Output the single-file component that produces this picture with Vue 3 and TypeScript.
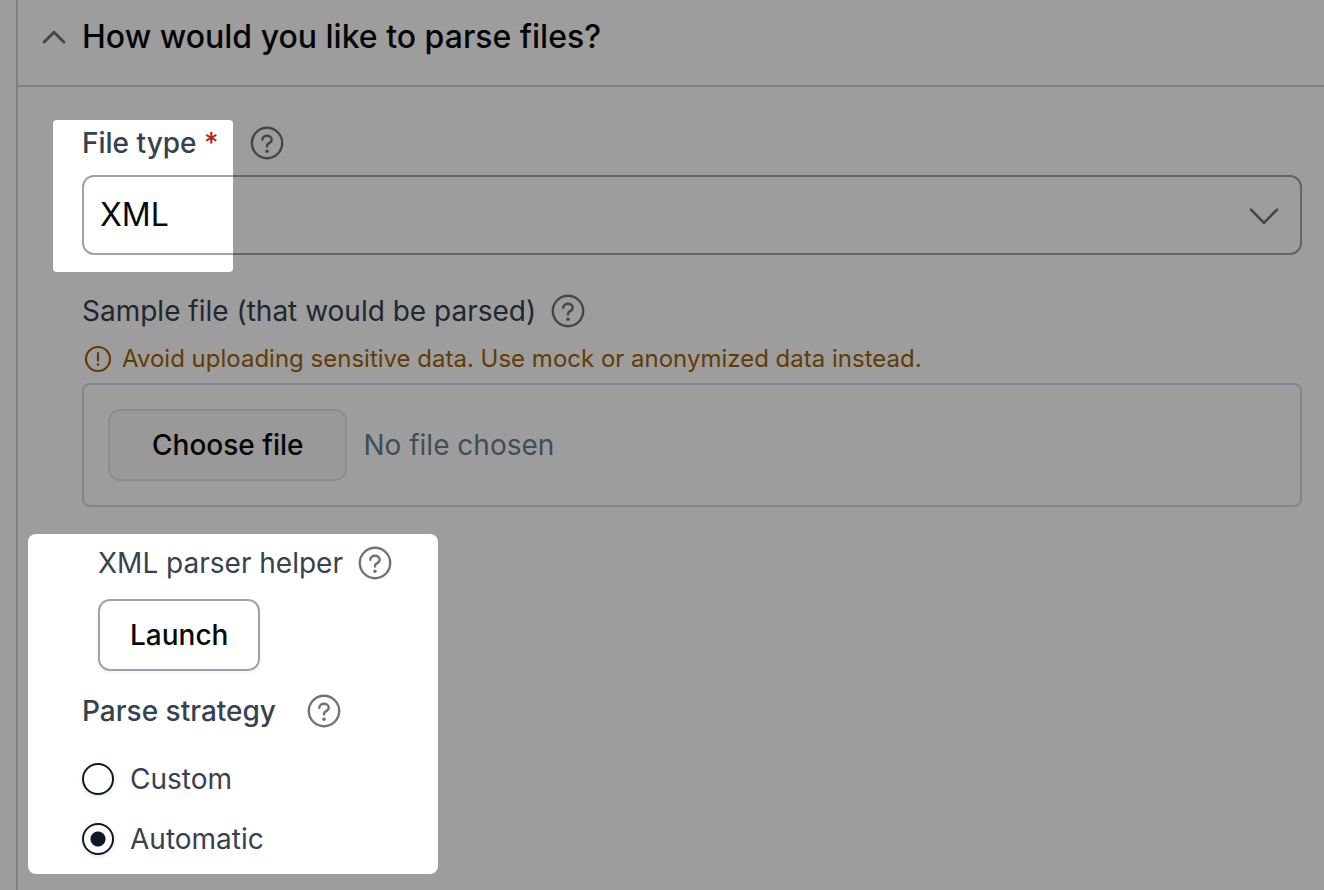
<script setup lang="ts">
import { computed, ref } from 'vue'

interface Hole {
  x: number
  y: number
  width: number
  height: number
  radius: number
}

const open = ref(true)
const fileType = ref('XML')
const fileTypes = ['XML', 'JSON', 'CSV']
const strategy = ref('automatic')
const strategies = [
  { value: 'custom', label: 'Custom' },
  { value: 'automatic', label: 'Automatic' },
]

const picker = ref<HTMLInputElement | null>(null)
const fileName = ref('')
const fileLabel = computed(() => fileName.value || 'No file chosen')

function onPick(event: Event) {
  fileName.value = (event.target as HTMLInputElement).files?.[0]?.name ?? ''
}

// Regions left undimmed by the tour overlay
const holes: Hole[] = [
  { x: 53, y: 120, width: 180, height: 152, radius: 4 },
  { x: 28, y: 534, width: 410, height: 340, radius: 8 },
]
</script>

<template>
  <main class="page">
    <svg class="symbols" aria-hidden="true">
      <symbol id="help" viewBox="0 0 34 34">
        <circle cx="17" cy="17" r="15.2" fill="none" stroke="currentColor" stroke-width="2.4" />
        <path
          d="M12.3 13.8C12.3 11.3 14.4 9.8 17 9.8C19.7 9.8 21.7 11.4 21.7 13.7C21.7 16 19.8 16.8 18.4 17.6C17.4 18.2 17 18.9 17 20.4"
          fill="none" stroke="currentColor" stroke-width="2.4" stroke-linecap="round" />
        <circle cx="17" cy="25.2" r="1.8" fill="currentColor" />
      </symbol>
    </svg>

    <section class="panel">
      <h2 class="head">
        <button type="button" class="toggle" :aria-expanded="open" @click="open = !open">
          <svg class="caret" viewBox="0 0 24 24" aria-hidden="true">
            <path d="M2.2 17L12 7.2L21.8 17" fill="none" stroke="currentColor" stroke-width="3"
              stroke-linecap="round" stroke-linejoin="round" />
          </svg>
          <span>How would you like to parse files?</span>
        </button>
      </h2>

      <div v-show="open" class="body">
        <div class="field">
          <div class="row">
            <label for="file-type" class="title">File type <span class="required">*</span></label>
            <button type="button" class="help far" aria-label="Help"><svg><use href="#help" /></svg></button>
          </div>
          <div class="select-wrap">
            <select id="file-type" v-model="fileType" required>
              <option v-for="type in fileTypes" :key="type">{{ type }}</option>
            </select>
            <svg class="arrow" viewBox="0 0 30 18" aria-hidden="true">
              <path d="M2 2.6L15 15.8L28 2.6" fill="none" stroke="currentColor" stroke-width="2.6" stroke-linecap="round"
                stroke-linejoin="round" />
            </svg>
          </div>
        </div>

        <div class="field">
          <div class="row">
            <label for="sample">Sample file (that would be parsed)</label>
            <button type="button" class="help" aria-label="Help"><svg><use href="#help" /></svg></button>
          </div>
          <p class="warning">
            <svg viewBox="0 0 32 32" aria-hidden="true">
              <circle cx="16" cy="16" r="12" fill="none" stroke="currentColor" stroke-width="2.2" />
              <path d="M16 10V17.4" stroke="currentColor" stroke-width="2.2" stroke-linecap="round" />
              <circle cx="16" cy="21.6" r="1.4" fill="currentColor" />
            </svg>
            <span>Avoid uploading sensitive data. Use mock or anonymized data instead.</span>
          </p>
          <div class="upload">
            <button type="button" class="choose" @click="picker?.click()">Choose file</button>
            <input id="sample" ref="picker" type="file" hidden @change="onPick" />
            <span class="chosen">{{ fileLabel }}</span>
          </div>
        </div>

        <div class="helper">
          <div class="row">
            <label for="launch">XML parser helper</label>
            <button type="button" class="help" aria-label="Help"><svg><use href="#help" /></svg></button>
          </div>
          <button id="launch" type="button" class="launch">Launch</button>
        </div>

        <div class="strategy" role="radiogroup" aria-labelledby="strategy-title">
          <div class="row">
            <span id="strategy-title" class="title">Parse strategy</span>
            <button type="button" class="help far" aria-label="Help"><svg><use href="#help" /></svg></button>
          </div>
          <div class="options">
            <label v-for="option in strategies" :key="option.value" class="option">
              <input v-model="strategy" type="radio" name="strategy" :value="option.value" />
              <span>{{ option.label }}</span>
            </label>
          </div>
        </div>
      </div>
    </section>

    <svg class="dim" aria-hidden="true">
      <mask id="spotlights">
        <rect width="100%" height="100%" fill="white" />
        <rect v-for="hole in holes" :key="hole.y" :x="hole.x" :y="hole.y" :width="hole.width" :height="hole.height"
          :rx="hole.radius" fill="black" />
      </mask>
      <rect width="100%" height="100%" fill="black" fill-opacity="0.385" mask="url(#spotlights)" />
    </svg>
  </main>
</template>

<style>
body {
  background: #fff;
}
</style>

<style scoped>
.page {
  position: relative;
  display: flex;
  box-sizing: border-box;
  min-height: 100vh;
  padding-left: 16px;
  background: #fff;
  color: #36424f;
  font-family: Inter, "Liberation Sans", sans-serif;
  font-optical-sizing: none;
  font-size: 28px;
  line-height: 40px;
}

.symbols {
  position: absolute;
  width: 0;
  height: 0;
}

.panel {
  flex: 1;
  border-left: 2px solid #d0d0d0;
}

button,
select {
  font: inherit;
  color: #09090b;
}

.head {
  margin: 0;
  padding: 13px 24px 24px;
  border-bottom: 2px solid #d0d0d0;
}

.toggle {
  display: flex;
  align-items: center;
  gap: 16px;
  padding: 0;
  border: 0;
  background: none;
  font-size: 32px;
  font-weight: 500;
  line-height: 48px;
}

.caret {
  width: 24px;
  height: 24px;
  color: #71717a;
}

.body {
  padding: 36px 22px 32px 64px;
}

.field {
  margin-bottom: 36px;
}

.row {
  display: flex;
  align-items: center;
  gap: 15px;
}

.required {
  color: #b91c1c;
}

.help {
  display: flex;
  padding: 0;
  border: 0;
  background: none;
  color: #71717a;
}

.help svg {
  width: 34px;
  height: 34px;
}

.far {
  margin-left: 16px;
}

.select-wrap {
  position: relative;
  margin-top: 12px;
}

select {
  display: block;
  width: 100%;
  height: 80px;
  padding: 0 72px 0 16px;
  border: 2px solid #a1a1aa;
  border-radius: 12px;
  background: #fff;
  font-size: 32px;
  appearance: none;
}

.arrow {
  position: absolute;
  top: 32px;
  right: 23px;
  width: 30px;
  height: 18px;
  color: #71717a;
  pointer-events: none;
}

.warning {
  display: flex;
  align-items: center;
  gap: 8px;
  margin: 8px 0 4px;
  color: #a16207;
  font-size: 24px;
}

.warning svg {
  width: 32px;
  height: 32px;
}

.upload {
  display: flex;
  align-items: center;
  gap: 16px;
  padding: 24px;
  border: 2px solid #cfdbe3;
  border-radius: 8px;
}

.choose,
.launch {
  box-sizing: border-box;
  height: 72px;
  border: 2px solid #e4e4e7;
  border-radius: 12px;
  background: #f8f8f8;
  font-weight: 500;
}

.choose {
  padding: 0 42px;
}

.chosen {
  color: #6a7f8f;
}

.helper {
  padding-left: 16px;
  margin-bottom: 20px;
}

.launch {
  display: block;
  margin-top: 16px;
  padding: 0 30px;
  border-color: #a1a1aa;
  background: #fff;
  box-shadow: 0 2px 4px rgb(0 0 0 / 6%);
}

.title {
  font-weight: 500;
}

.options {
  display: grid;
  justify-items: start;
  gap: 20px;
  margin-top: 28px;
}

.option {
  display: flex;
  align-items: center;
  gap: 16px;
}

.option input {
  box-sizing: border-box;
  width: 32px;
  height: 32px;
  margin: 0;
  border: 2px solid #0f172a;
  border-radius: 50%;
  background: #fff;
  box-shadow: 0 2px 4px rgb(0 0 0 / 10%);
  appearance: none;
}

.option input:checked {
  background: radial-gradient(circle, #0f172a 7px, #fff 8px);
}

.dim {
  position: absolute;
  inset: 0;
  width: 100%;
  height: 100%;
  pointer-events: none;
}
</style>
